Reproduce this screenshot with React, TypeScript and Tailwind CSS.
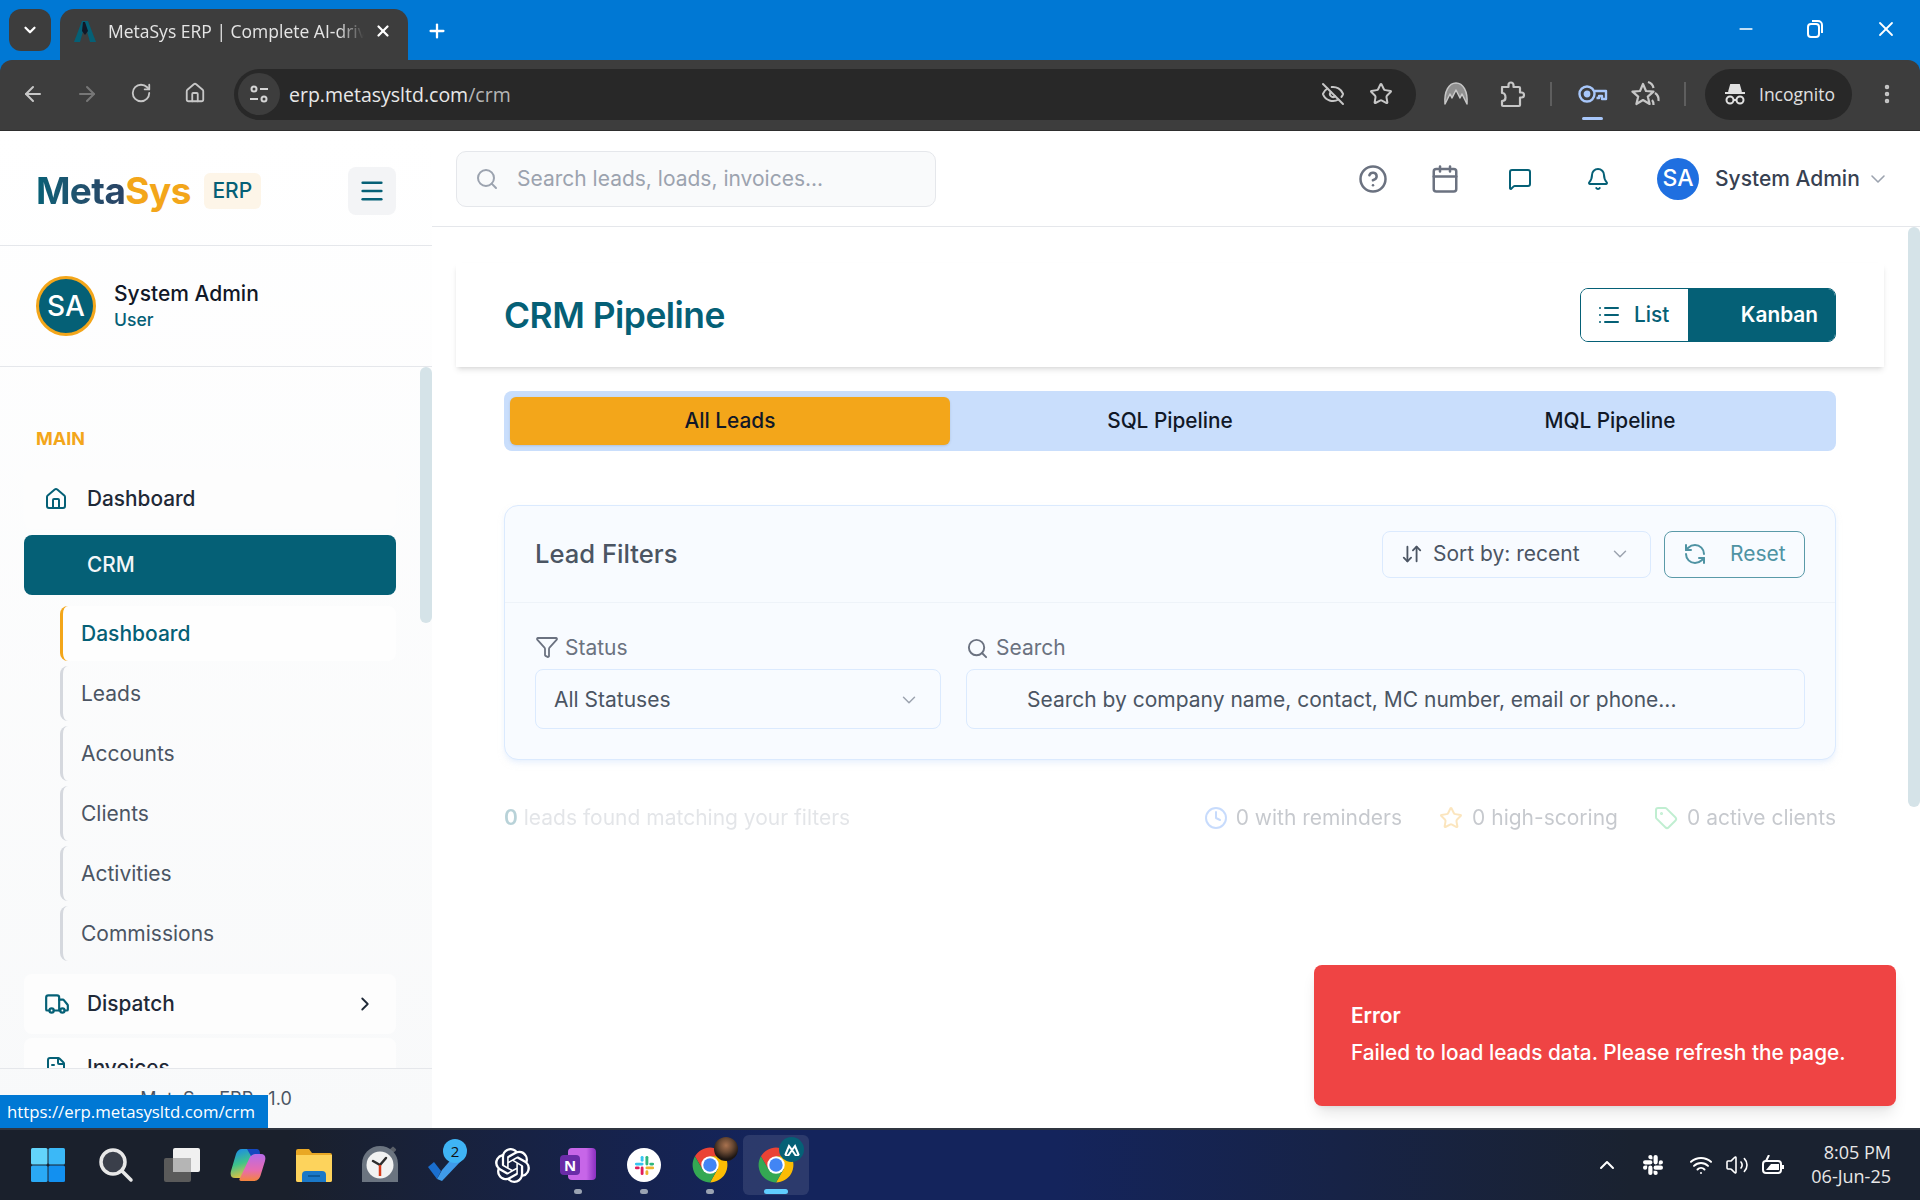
import {
  ArrowDownUp,
  ArrowLeft,
  ArrowRight,
  Bell,
  Calendar,
  ChevronDown,
  ChevronRight,
  ChevronUp,
  CircleHelp,
  Clock,
  EllipsisVertical,
  EyeOff,
  FileText,
  Filter,
  Home,
  List,
  Menu,
  MessageSquare,
  Minus,
  Plus,
  RefreshCcw,
  RotateCw,
  Search,
  Star,
  Tag,
  Truck,
  Volume2,
  Wifi,
  X,
} from "lucide-react";
import { SiOpenai, SiSlack } from "react-icons/si";

const CHROME_FONT = "font-['Open_Sans','Noto_Sans',sans-serif]";

function Favicon() {
  return (
    <svg width="26" height="26" viewBox="0 0 26 26" fill="none">
      <path d="M2 24 L10 3 L14 3 L8 24 Z" fill="#056076" />
      <path d="M24 24 L16 3 L12 3 L18 24 Z" fill="#056076" />
      <path d="M11 4 L13 4 L16 13 L13 17 L10 13 Z" fill="#111827" />
    </svg>
  );
}

function TabStrip() {
  return (
    <div className="flex h-[60px] shrink-0 items-end bg-[#0078d4] pl-[9px]">
      <div className="mb-[9px] flex h-[42px] w-[42px] items-center justify-center rounded-xl bg-[#3d3d3d] text-white">
        <ChevronDown size={18} strokeWidth={3} />
      </div>
      <div className={`ml-[9px] flex h-[51px] w-[348px] items-center rounded-t-[14px] bg-[#3d3d3d] pb-[7px] pl-[12px] text-[#e5e5e5] ${CHROME_FONT}`}>
        <Favicon />
        <span className="ml-[10px] w-[256px] overflow-hidden whitespace-nowrap text-[17.5px] [mask-image:linear-gradient(to_right,black_90%,transparent)]">
          MetaSys ERP | Complete AI-driven Logistics
        </span>
        <X size={18} strokeWidth={3} className="ml-[10px] text-white" />
      </div>
      <Plus size={22} strokeWidth={2.5} className="mb-[18px] ml-[18px] text-white" />
      <div className="mb-[19px] ml-auto flex items-center text-white">
        <Minus size={20} strokeWidth={2} className="mr-[50px]" />
        <svg width="18" height="20" viewBox="0 0 18 20" fill="none" stroke="white" strokeWidth="2" className="mr-[50px]">
          <rect x="2" y="5" width="11" height="13" rx="3" />
          <path d="M6 2h6a4 4 0 0 1 4 4v8" />
        </svg>
        <X size={24} strokeWidth={1.8} className="mr-[22px]" />
      </div>
    </div>
  );
}

function Toolbar() {
  return (
    <div className={`flex h-[71px] shrink-0 items-center rounded-tl-xl rounded-tr-xl border-b border-[#2e2e2e] bg-[#3d3d3d] pb-[2px] text-[#c7c7c7] ${CHROME_FONT}`}>
      <div className="ml-[11px] flex gap-[10px]">
        <div className="flex w-[44px] justify-center"><ArrowLeft size={24} strokeWidth={2} /></div>
        <div className="flex w-[44px] justify-center text-[#777777]"><ArrowRight size={24} strokeWidth={2} /></div>
        <div className="flex w-[44px] justify-center"><RotateCw size={22} strokeWidth={2} /></div>
        <div className="flex w-[44px] justify-center"><Home size={22} strokeWidth={2} /></div>
      </div>
      <div className="ml-[17px] flex h-[51px] w-[1182px] items-center rounded-full bg-[#282828] pl-[4px] pr-[23px]">
        <div className="flex h-[42px] w-[42px] items-center justify-center rounded-full bg-[#3d3d3d]">
          <svg width="20" height="20" viewBox="0 0 20 20" fill="none" stroke="#d4d4d4" strokeWidth="2">
            <circle cx="5" cy="5" r="2.5" />
            <path d="M11 5h8M1 15h8" />
            <circle cx="15" cy="15" r="2.5" />
          </svg>
        </div>
        <span className="ml-[9px] pt-[1px] text-[19.5px] text-[#e8e8e8]">
          erp.metasysltd.com<span className="text-[#b5b5b5]">/crm</span>
        </span>
        <EyeOff size={24} strokeWidth={2} className="ml-auto mr-[24px]" />
        <Star size={24} strokeWidth={2} />
      </div>
      <svg width="26" height="26" viewBox="0 0 26 26" className="ml-[27px]">
        <path d="M2 23 C1 10 6 2 13 2 C20 2 25 10 24 23 L19 13 L17 17 L13 9 L9 17 L7 13 Z" fill="#8f8f8f" stroke="#c7c7c7" strokeWidth="1.5" strokeLinejoin="round" />
      </svg>
      <svg width="28" height="28" viewBox="0 0 28 28" fill="none" stroke="#c7c7c7" strokeWidth="2.2" strokeLinejoin="round" className="ml-[29px]">
        <path d="M4 7h6.5V5a2.5 2.5 0 0 1 5 0v2H21a1 1 0 0 1 1 1v4.5h1.5a2 2 0 0 1 0 5H22V25a1 1 0 0 1-1 1H5a1 1 0 0 1-1-1v-4c3 0 3.5-2 3.5-3.5S7 13 4 13V8a1 1 0 0 1 1-1z" />
      </svg>
      <div className="ml-[24px] h-[24px] w-[2px] bg-[#5e5e5e]" />
      <div className="relative ml-[26px]">
        <svg width="30" height="22" viewBox="0 0 30 22" fill="none" stroke="#a8c7fa" strokeWidth="2.4" strokeLinejoin="round">
          <circle cx="9" cy="11" r="7.5" />
          <circle cx="9" cy="11" r="2.2" fill="#a8c7fa" />
          <path d="M16.5 8H28v8h-4v-3h-3v2h-2.5" />
        </svg>
        <div className="absolute left-[4px] top-[34px] h-[3px] w-[21px] rounded bg-[#a8c7fa]" />
      </div>
      <svg width="30" height="30" viewBox="0 0 30 30" fill="none" stroke="#c7c7c7" strokeWidth="2.2" strokeLinejoin="round" className="ml-[23px]">
        <path d="M12 5l3 7 7.5.6-5.7 5 1.8 7.4-6.6-4-6.6 4 1.8-7.4L1.5 12.600l7.5-.6z" />
        <path d="M17 3c3 1 5 3 5.500 6M24 14c3 2 4 4 3.500 8M21 21c1 1 1.500 3 1.500 5" />
      </svg>
      <div className="ml-[23px] h-[24px] w-[2px] bg-[#5e5e5e]" />
      <div className="ml-[19px] flex h-[51px] w-[147px] items-center rounded-full bg-[#282828] pl-[18px]">
        <svg width="24" height="24" viewBox="0 0 24 24" fill="none" stroke="#e0e0e0" strokeWidth="2">
          <path d="M6 10 L8 3 H16 L18 10" fill="#e0e0e0" />
          <path d="M2 11 H22" />
          <circle cx="7" cy="18" r="3.5" />
          <circle cx="17" cy="18" r="3.500" />
          <path d="M10.5 18 H13.5" />
        </svg>
        <span className="ml-[12px] text-[17.5px] text-[#e0e0e0]">Incognito</span>
      </div>
      <EllipsisVertical size={24} strokeWidth={2.5} className="ml-[23px]" />
    </div>
  );
}

function NavRow({ icon, label, active, chevron }: { icon?: React.ReactNode; label: string; active?: boolean; chevron?: boolean }) {
  return (
    <div
      className={`flex h-[60px] shrink-0 items-center rounded-lg pl-[20px] pr-[20px] text-[20.8px] font-medium ${
        active ? "bg-[#056076] text-[#f3f6f8]" : "bg-[#fdfdfd] text-[#1f2937]"
      }`}
    >
      <div className="flex w-[43px] shrink-0 text-[#056076]">{icon}</div>
      <span>{label}</span>
      {chevron && <ChevronRight size={22} strokeWidth={2} className="ml-auto text-[#1f2937]" />}
    </div>
  );
}

function SubItem({ label, active }: { label: string; active?: boolean }) {
  return (
    <div
      className={`ml-[36px] flex h-[55px] shrink-0 items-center rounded-lg border-l-[3px] pl-[18px] text-[21px] ${
        active ? "border-[#f3a61a] bg-[#fefefe] text-[20.8px] font-medium text-[#056076]" : "border-[#d5d8de] text-[#4b5563]"
      }`}
    >
      {label}
    </div>
  );
}

function Sidebar() {
  return (
    <aside className="flex w-[432px] shrink-0 flex-col bg-gradient-to-b from-white to-[#f8f9fa] font-['Inter',sans-serif]">
      <div className="flex h-[115px] shrink-0 items-center border-b border-[#e5e7eb] pl-[36px] pt-[6px]">
        <span className="bg-gradient-to-r from-[#056076] to-[#2a4365] bg-clip-text text-[37px] font-bold tracking-[-0.6px] text-transparent">
          Meta
        </span>
        <span className="text-[37px] font-bold tracking-[-0.6px] text-[#f3a61a]">Sys</span>
        <span className="ml-[13px] flex h-[36px] w-[57px] items-center justify-center rounded-md bg-[#fdf5e8] text-[21px] font-medium text-[#056076]">
          ERP
        </span>
        <div className="ml-[87px] flex h-[48px] w-[48px] items-center justify-center rounded-lg bg-[#f3f4f6] text-[#056076]">
          <Menu size={28} strokeWidth={2.2} />
        </div>
      </div>
      <div className="flex h-[121px] shrink-0 items-center border-b border-[#e5e7eb] pl-[36px]">
        <div className="flex h-[60px] w-[60px] items-center justify-center rounded-full border-[3px] border-[#f3a61a] bg-[#056076] text-[28px] font-medium text-white">
          SA
        </div>
        <div className="ml-[18px]">
          <div className="text-[21px] font-medium leading-[28px] text-[#111827]">System Admin</div>
          <div className="text-[17.5px] font-medium leading-[24px] text-[#056076]">User</div>
        </div>
      </div>
      <div className="relative flex min-h-0 flex-1 flex-col overflow-hidden px-[36px] pt-[60px]">
        <div className="absolute right-0 top-0 h-[256px] w-[12px] rounded-md bg-[#d5e3e8]" />
        <div className="mb-[18px] text-[18px] font-bold leading-[24px] text-[#f3a61a]">MAIN</div>
        <div className="-ml-[12px] flex flex-col gap-[6px]">
          <NavRow icon={<Home size={24} strokeWidth={2} />} label="Dashboard" />
          <NavRow label="CRM" active />
          <div className="mt-[5px] flex flex-col gap-[5px]">
            <SubItem label="Dashboard" active />
            <SubItem label="Leads" />
            <SubItem label="Accounts" />
            <SubItem label="Clients" />
            <SubItem label="Activities" />
            <SubItem label="Commissions" />
          </div>
          <div className="mt-[7px]">
            <NavRow icon={<Truck size={26} strokeWidth={2} />} label="Dispatch" chevron />
          </div>
          <div className="-mt-[2px]">
            <NavRow icon={<FileText size={24} strokeWidth={2} />} label="Invoices" />
          </div>
        </div>
      </div>
      <div className="flex h-[60px] shrink-0 items-start justify-center border-t border-[#e5e7eb] pt-[18px] text-[18px] leading-[24px] text-[#4b5563]">
        MetaSys ERP v1.0
      </div>
    </aside>
  );
}

function Topbar() {
  return (
    <header className="flex h-[96px] shrink-0 items-center border-b border-[#e5e7eb] pl-[24px]">
      <div className="flex h-[56px] w-[480px] items-center rounded-[10px] border border-[#e5e7eb] bg-[#f9fafb] pl-[18px] text-[#9ca3af]">
        <Search size={24} strokeWidth={2} />
        <span className="ml-[18px] text-[21px]">Search leads, loads, invoices...</span>
      </div>
      <CircleHelp size={30} strokeWidth={2} className="ml-[422px] text-[#6b7280]" />
      <Calendar size={30} strokeWidth={2} className="ml-[42px] text-[#6b7280]" />
      <MessageSquare size={24} strokeWidth={2} className="ml-[48px] text-[#056076]" />
      <Bell size={24} strokeWidth={2} className="ml-[54px] text-[#056076]" />
      <div className="ml-[47px] flex h-[42px] w-[42px] items-center justify-center rounded-full bg-[#1f6fe0] text-[23px] font-medium text-white">
        SA
      </div>
      <span className="ml-[16px] text-[21px] font-medium text-[#374151]">System Admin</span>
      <ChevronDown size={24} strokeWidth={1.6} className="ml-[6px] text-[#9ca3af]" />
    </header>
  );
}

function FilterCard() {
  return (
    <div className="ml-[72px] mr-[84px] mt-[54px] rounded-[14px] border border-[#dbeafe] bg-[#f8fbff] shadow-md shadow-blue-100/50">
      <div className="flex h-[97px] items-center border-b border-[#eef3f9] pl-[30px] pr-[30px]">
        <span className="text-[25.6px] font-medium text-[#4b5563]">Lead Filters</span>
        <div className="ml-auto flex h-[47px] w-[269px] items-center rounded-lg border border-[#dbeafe] pl-[18px] text-[21px] text-[#4b5563]">
          <ArrowDownUp size={22} strokeWidth={2} />
          <span className="ml-[10px]">Sort by: recent</span>
          <ChevronDown size={22} strokeWidth={1.6} className="ml-auto mr-[19px] text-[#9ca3af]" />
        </div>
        <div className="ml-[13px] flex h-[47px] w-[141px] items-center rounded-lg border border-[#5a9aa8] pl-[18px] text-[21px] text-[#4f93a3]">
          <RefreshCcw size={24} strokeWidth={2} />
          <span className="ml-[23px]">Reset</span>
        </div>
      </div>
      <div className="flex gap-[25px] px-[30px] pb-[30px] pt-[32px] text-[21px]">
        <div className="w-[406px]">
          <div className="flex h-[34px] items-start text-[#6b7280]">
            <Filter size={24} strokeWidth={1.8} />
            <span className="ml-[6px] leading-[26px]">Status</span>
          </div>
          <div className="flex h-[60px] items-center rounded-lg border border-[#dbeafe] pl-[18px] pt-[1px] text-[#4b5563]">
            All Statuses
            <ChevronDown size={22} strokeWidth={1.6} className="ml-auto mr-[20px] text-[#9ca3af]" />
          </div>
        </div>
        <div className="flex-1">
          <div className="flex h-[34px] items-start text-[#6b7280]">
            <Search size={23} strokeWidth={2} className="mt-[2px]" />
            <span className="ml-[7px] leading-[26px]">Search</span>
          </div>
          <div className="flex h-[60px] items-center rounded-lg border border-[#dbeafe] pl-[60px] pt-[1px] text-[#4b5563]">
            Search by company name, contact, MC number, email or phone...
          </div>
        </div>
      </div>
    </div>
  );
}

function Stats() {
  return (
    <div className="ml-[72px] mr-[84px] mt-[45px] flex items-center text-[21px] leading-[26px] opacity-[0.28]">
      <span className="text-[#9ca3af]">
        <span className="font-semibold text-[#056076]">0</span> leads found matching your filters
      </span>
      <Clock size={24} strokeWidth={2} className="ml-auto text-[#3b82f6]" />
      <span className="ml-[8px] text-[#374151]">0 with reminders</span>
      <Star size={24} strokeWidth={2} className="ml-[37px] text-[#f3a61a]" />
      <span className="ml-[9px] text-[#374151]">0 high-scoring</span>
      <Tag size={24} strokeWidth={2} className="ml-[36px] text-[#22c55e]" />
      <span className="ml-[9px] text-[#374151]">0 active clients</span>
    </div>
  );
}

function Main() {
  return (
    <main className="relative min-w-0 flex-1 overflow-hidden bg-white font-['Inter',sans-serif]">
      <div className="absolute right-0 top-[96px] h-[580px] w-[12px] rounded-md bg-[#d5e3e8]" />
      <Topbar />
      <div className="ml-[24px] mr-[36px] mt-[36px] flex h-[104px] items-center bg-white pl-[48px] pr-[48px] shadow-md">
        <h1 className="pt-[2px] text-[35.4px] font-semibold tracking-[-0.5px] text-[#056076]">CRM Pipeline</h1>
        <div className="ml-auto flex h-[54px] w-[256px] overflow-hidden rounded-lg border border-[#056076] text-[20.8px]">
          <div className="flex w-[107px] items-center bg-white pl-[16px] font-medium text-[#056076]">
            <List size={24} strokeWidth={2} />
            <span className="ml-[13px]">List</span>
          </div>
          <div className="flex flex-1 items-center justify-end bg-[#056076] pr-[17px] font-semibold text-white">Kanban</div>
        </div>
      </div>
      <div className="ml-[72px] mr-[84px] mt-[24px] grid h-[60px] grid-cols-3 rounded-lg bg-[#c9defc] p-[6px] text-[20.8px] font-medium text-[#111827]">
        <div className="flex items-center justify-center rounded-md bg-[#f3a61a] shadow-sm">All Leads</div>
        <div className="flex items-center justify-center">SQL Pipeline</div>
        <div className="flex items-center justify-center">MQL Pipeline</div>
      </div>
      <FilterCard />
      <Stats />
    </main>
  );
}

function ChromeLogo({ size = 38 }: { size?: number }) {
  return (
    <svg width={size} height={size} viewBox="0 0 48 48">
      <path d="M4.950 13A22 22 0 0 1 43.050 13L24 13L14.500 29.500Z" fill="#ea4335" />
      <path d="M43.050 13A22 22 0 0 1 24 46L33.500 29.500L24 13Z" fill="#fbbc04" />
      <path d="M24 46A22 22 0 0 1 4.950 13L14.500 29.500L33.500 29.500Z" fill="#34a853" />
      <circle cx="24" cy="24" r="11" fill="white" />
      <circle cx="24" cy="24" r="8.500" fill="#4285f4" />
    </svg>
  );
}

function Cell({ children, dot, active }: { children: React.ReactNode; dot?: boolean; active?: boolean }) {
  return (
    <div className={`relative flex h-[60px] w-[66px] shrink-0 items-center justify-center rounded-md ${active ? "bg-white/10" : ""}`}>
      {children}
      {dot && <div className="absolute bottom-[1px] h-[5px] w-[8px] rounded-full bg-[#9aa3b2]" />}
      {active && <div className="absolute bottom-[1px] h-[5px] w-[24px] rounded-full bg-[#60cdff]" />}
    </div>
  );
}

function Taskbar() {
  return (
    <div className={`flex h-[72px] shrink-0 items-center border-t-2 border-[#2f3540] bg-[linear-gradient(to_right,#1a202c_0%,#1a202c_15%,#14245c_40%,#14245c_55%,#1a2230_85%)] pl-[15px] ${CHROME_FONT}`}>
      <Cell>
        <svg width="36" height="36" viewBox="0 0 36 36">
          <rect x="1" y="1" width="16.5" height="16.5" rx="1.5" fill="#63d4fb" />
          <rect x="18.5" y="1" width="16.5" height="16.5" rx="1.5" fill="#3bb8f7" />
          <rect x="1" y="18.5" width="16.5" height="16.5" rx="1.5" fill="#2aa9f5" />
          <rect x="18.5" y="18.5" width="16.5" height="16.5" rx="1.5" fill="#1290f0" />
        </svg>
      </Cell>
      <div className="ml-[2px]">
        <Cell>
          <svg width="36" height="36" viewBox="0 0 36 36" fill="none">
            <circle cx="15" cy="15" r="12" fill="#3a3f4a" stroke="#e8e8e8" strokeWidth="3.5" />
            <path d="M24 24l9 9" stroke="#e8e8e8" strokeWidth="3.500" strokeLinecap="round" />
          </svg>
        </Cell>
      </div>
      <Cell>
        <svg width="38" height="36" viewBox="0 0 38 36">
          <rect x="1" y="11" width="27" height="24" rx="2" fill="#5a5a5a" />
          <rect x="10" y="1" width="27" height="24" rx="2" fill="#f0f0f0" />
          <rect x="10" y="11" width="18" height="14" fill="#b5b5b5" />
        </svg>
      </Cell>
      <Cell>
        <svg width="36" height="34" viewBox="0 0 36 34">
          <defs>
            <linearGradient id="cpa" x1="0.2" y1="0" x2="0.5" y2="1">
              <stop offset="0" stopColor="#1a8ae8" />
              <stop offset="0.5" stopColor="#3fc38a" />
              <stop offset="1" stopColor="#f3c23a" />
            </linearGradient>
            <linearGradient id="cpb" x1="0.5" y1="0" x2="0.5" y2="1">
              <stop offset="0" stopColor="#b76be8" />
              <stop offset="0.6" stopColor="#e76bb0" />
              <stop offset="1" stopColor="#f4853c" />
            </linearGradient>
          </defs>
          <path d="M12 1h14c2 0 2 2 1 3L16 27c-1 2-2 3-5 3H5c-4 0-5-3-4-7L6 6c1-3 3-5 6-5z" fill="url(#cpa)" />
          <path d="M24 33H11c-2 0-2-2-1-3L20 9c1-2 3-3 5-3h6c4 0 5 3 4 7l-4 13c-1 4-3 7-7 7z" fill="url(#cpb)" />
          <path d="M17 1h8c4 0 5 1 5 5h-5c-2 0-3 1-4 2z" fill="#1547c0" />
        </svg>
      </Cell>
      <Cell>
        <svg width="36" height="34" viewBox="0 0 36 34">
          <path d="M0 3a2 2 0 0 1 2-2h11l3 4h18a2 2 0 0 1 2 2v25a2 2 0 0 1-2 2H2a2 2 0 0 1-2-2z" fill="#e9a825" />
          <path d="M0 7h36v25a2 2 0 0 1-2 2H2a2 2 0 0 1-2-2z" fill="#fdd35c" />
          <path d="M6 34V27a4 4 0 0 1 4-4h16a4 4 0 0 1 4 4v7z" fill="#1a78c8" />
          <rect x="12" y="27" width="12" height="2" fill="#0d5a9a" />
        </svg>
      </Cell>
      <Cell>
        <svg width="36" height="38" viewBox="0 0 36 38">
          <rect x="29" y="1" width="5" height="5" rx="1" transform="rotate(45 31 3)" fill="#5a5f68" />
          <path d="M0 36V18a18 18 0 0 1 36 0v18z" fill="#6b7480" />
          <circle cx="18" cy="19" r="13.500" fill="#f2f2f2" />
          <path d="M18 19l-7-4M18 19l6-7" stroke="#2d2d2d" strokeWidth="2.5" strokeLinecap="round" />
          <path d="M18 19v11" stroke="#d83b1a" strokeWidth="2.5" />
        </svg>
      </Cell>
      <Cell>
        <div className="relative h-[36px] w-[38px]">
          <svg width="38" height="36" viewBox="0 0 38 36" className="absolute bottom-0 left-0">
            <path d="M1 20l6-5 7 9L10 32z" fill="#1a6fd0" />
            <path d="M10 32l5-9L28 8l6 6L15 34z" fill="#3f9bea" />
          </svg>
          <div className="absolute -right-[2px] -top-[8px] flex h-[24px] w-[24px] items-center justify-center rounded-full bg-[#3fb4f5] text-[15px] text-[#111]">
            2
          </div>
        </div>
      </Cell>
      <Cell>
        <SiOpenai size={35} className="text-white" />
      </Cell>
      <Cell dot>
        <div className="relative flex h-[34px] w-[36px] justify-end">
          <div className="h-[32px] w-[28px] rounded-sm bg-[linear-gradient(to_right,#c766e8,#c766e8_65%,#8a2fc0)]" />
          <div className="absolute left-0 top-[7px] flex h-[20px] w-[20px] items-center justify-center rounded-sm bg-[#6a2ca8] text-[15px] font-bold text-white">
            N
          </div>
        </div>
      </Cell>
      <Cell dot>
        <div className="flex h-[34px] w-[34px] items-center justify-center rounded-full bg-white">
          <svg width="23" height="23" viewBox="0 0 24 24">
            <rect x="2" y="9" width="9" height="3" rx="1.5" fill="#36c5f0" />
            <rect x="8" y="2" width="3" height="6" rx="1.5" fill="#36c5f0" />
            <rect x="13" y="2" width="3" height="10" rx="1.5" fill="#2eb67d" />
            <rect x="17" y="9" width="5" height="3" rx="1.5" fill="#2eb67d" />
            <rect x="13" y="13" width="9" height="3" rx="1.5" fill="#ecb22e" />
            <rect x="13" y="17" width="3" height="5" rx="1.5" fill="#ecb22e" />
            <rect x="8" y="13" width="3" height="9" rx="1.5" fill="#e01e5a" />
            <rect x="2" y="13" width="5" height="3" rx="1.5" fill="#e01e5a" />
          </svg>
        </div>
      </Cell>
      <Cell dot>
        <div className="relative">
          <ChromeLogo />
          <div className="absolute -right-[9px] -top-[9px] h-[24px] w-[24px] rounded-full bg-[radial-gradient(circle_at_50%_35%,#a9724f_0%,#6b4a34_35%,#1d1613_70%)]" />
        </div>
      </Cell>
      <Cell active>
        <div className="relative">
          <ChromeLogo />
          <div className="absolute -right-[9px] -top-[9px] flex h-[25px] w-[25px] items-center justify-center rounded-full bg-[#056076] text-white">
            <svg width="16" height="12" viewBox="0 0 16 12" fill="none" stroke="white" strokeWidth="2">
              <path d="M1.500 10.500L5 2l3 4 3-4 3.500 8.500a2 2 0 0 1-3.500 0L8 6l-3 4.500a2 2 0 0 1-3.500 0z" />
            </svg>
          </div>
        </div>
      </Cell>
      <div className="ml-auto flex items-center text-white">
        <ChevronUp size={24} strokeWidth={2} />
        <SiSlack size={20} className="ml-[24px]" />
        <Wifi size={24} strokeWidth={2} className="ml-[26px]" />
        <Volume2 size={24} strokeWidth={1.6} className="ml-[12px]" />
        <svg width="24" height="20" viewBox="0 0 24 20" fill="none" stroke="white" strokeWidth="2" className="ml-[12px]">
          <rect x="2" y="6" width="18" height="12" rx="3" />
          <path d="M22 10v4" />
          <path d="M5 15l5-6h8v6z" fill="white" stroke="none" />
          <path d="M8 0L5 6h3" />
        </svg>
        <div className="ml-[26px] mr-[29px] pb-[2px] text-right text-[18px] leading-[24px] text-[#e8e8e8]">
          <div>8:05 PM</div>
          <div>06-Jun-25</div>
        </div>
      </div>
    </div>
  );
}

export default function App() {
  return (
    <div className="flex h-[1200px] w-[1920px] flex-col overflow-hidden bg-[#0078d4]">
      <TabStrip />
      <Toolbar />
      <div className="relative flex min-h-0 flex-1">
        <Sidebar />
        <Main />
        {/* Error toast */}
        <div className="absolute right-[24px] top-[834px] flex h-[141px] w-[582px] flex-col justify-center rounded-lg bg-[#ef4444] pb-[3px] pl-[37px] font-['Inter',sans-serif] text-[20.8px] font-medium leading-[37px] text-white shadow-lg">
          <div className="font-semibold">Error</div>
          <div>Failed to load leads data. Please refresh the page.</div>
        </div>
        {/* Link hover status */}
        <div className={`absolute bottom-0 left-0 flex h-[33px] w-[268px] items-center bg-[#0078d4] pl-[7px] text-[16.8px] text-white ${CHROME_FONT}`}>
          https://erp.metasysltd.com/crm
        </div>
      </div>
      <Taskbar />
    </div>
  );
}
